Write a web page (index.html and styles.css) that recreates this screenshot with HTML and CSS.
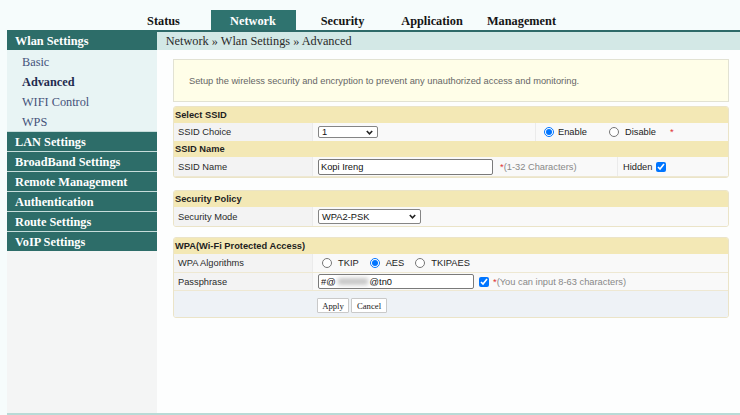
FILE: index.html
```html
<!DOCTYPE html>
<html>
<head>
<meta charset="utf-8">
<link rel="stylesheet" href="styles.css">
</head>
<body>
<div class="page">
  <nav class="tabs">
    <a class="tab">Status</a>
    <a class="tab active">Network</a>
    <a class="tab">Security</a>
    <a class="tab">Application</a>
    <a class="tab">Management</a>
  </nav>
  <div class="body">
    <aside class="side">
      <div class="grp first">Wlan Settings</div>
      <ul class="sub">
        <li>Basic</li>
        <li class="cur">Advanced</li>
        <li>WIFI Control</li>
        <li>WPS</li>
      </ul>
      <div class="grp">LAN Settings</div>
      <div class="grp">BroadBand Settings</div>
      <div class="grp">Remote Management</div>
      <div class="grp">Authentication</div>
      <div class="grp">Route Settings</div>
      <div class="grp">VoIP Settings</div>
    </aside>
    <main class="main">
      <div class="crumb">Network » Wlan Settings » Advanced</div>
      <div class="content">
        <div class="desc">Setup the wireless security and encryption to prevent any unauthorized access and monitoring.</div>

        <section class="tbl">
          <div class="th">Select SSID</div>
          <div class="row r18">
            <div class="lbl">SSID Choice</div>
            <div class="val v-choice">
              <div class="sel sel-s"><span>1</span><svg width="7" height="5" viewBox="0 0 7 5"><path d="M0.8 1 L3.5 3.8 L6.2 1" fill="none" stroke="#222" stroke-width="1.6"/></svg></div>
            </div>
            <div class="val v-rest">
              <label class="opt o-en"><input type="radio" name="en" checked><span>Enable</span></label>
              <label class="opt o-dis"><input type="radio" name="en"><span>Disable</span></label>
              <span class="req">*</span>
            </div>
          </div>
          <div class="th">SSID Name</div>
          <div class="row r20">
            <div class="lbl">SSID Name</div>
            <div class="val v-name">
              <input class="inp inp-name" type="text" value="Kopi Ireng">
              <span class="note"><span class="req">*</span>(1-32 Characters)</span>
            </div>
            <div class="val v-rest v-hidden">
              <span>Hidden</span><input class="chk" type="checkbox" checked>
            </div>
          </div>
        </section>

        <section class="tbl t2">
          <div class="th">Security Policy</div>
          <div class="row r19">
            <div class="lbl">Security Mode</div>
            <div class="val v-full">
              <div class="sel sel-m"><span>WPA2-PSK</span><svg width="7" height="5" viewBox="0 0 7 5"><path d="M0.8 1 L3.5 3.8 L6.2 1" fill="none" stroke="#222" stroke-width="1.6"/></svg></div>
            </div>
          </div>
        </section>

        <section class="tbl t3">
          <div class="th">WPA(Wi-Fi Protected Access)</div>
          <div class="row r18">
            <div class="lbl">WPA Algorithms</div>
            <div class="val v-full">
              <label class="opt o-alg"><input type="radio" name="alg"><span>TKIP</span></label>
              <label class="opt o-alg"><input type="radio" name="alg" checked><span>AES</span></label>
              <label class="opt o-alg"><input type="radio" name="alg"><span>TKIPAES</span></label>
            </div>
          </div>
          <div class="row r18 bt">
            <div class="lbl">Passphrase</div>
            <div class="val v-full">
              <div class="inp inp-pass">#@<span class="blur"></span>@tn0</div>
              <input class="chk chk-pass" type="checkbox" checked>
              <span class="note"><span class="req">*</span>(You can input 8-63 characters)</span>
            </div>
          </div>
          <div class="row btnrow">
            <button class="btn b-apply">Apply</button>
            <button class="btn b-cancel">Cancel</button>
          </div>
        </section>
      </div>
    </main>
  </div>
  <div class="foot"></div>
</div>
</body>
</html>
```
FILE: styles.css
```css
* { box-sizing: border-box; }
body {
  margin: 0;
  background: #f6fcfc;
  font-family: "Liberation Serif", serif;
}
.page {
  width: 740px;
  height: 415px;
  display: flex;
  flex-direction: column;
}
.tabs {
  height: 30px;
  padding: 10px 0 0 121px;
  display: flex;
  gap: 4.5px;
}
.tab {
  width: 85px;
  height: 20px;
  line-height: 22px;
  text-align: center;
  font-weight: bold;
  font-size: 12.3px;
  color: #141414;
}
.tab.active {
  background: #2f736f;
  color: #fff;
}
.body {
  flex: 1;
  display: flex;
}
.side {
  width: 150px;
  margin-left: 7px;
  background: #f4f5f5;
}
.grp {
  height: 20px;
  line-height: 21px;
  padding-left: 8px;
  border-top: 1px solid #c7dddb;
  background: #2d6d69;
  color: #fff;
  font-weight: bold;
  font-size: 12.3px;
}
.grp.first {
  border-top: 0;
  line-height: 22px;
}
.sub {
  list-style: none;
  margin: 0;
  padding: 1px 0 0;
  background: #e8f4f4;
}
.sub li {
  height: 20px;
  line-height: 22px;
  padding-left: 15px;
  font-size: 12.3px;
  color: #44527a;
}
.sub li.cur {
  font-weight: bold;
  color: #1f2b4f;
}
.main {
  flex: 1;
  background: #fdfefe;
}
.crumb {
  height: 20px;
  border-top: 2px solid #2e6a69;
  background: #d3e8e6;
  padding-left: 8.7px;
  line-height: 19px;
  font-size: 12.3px;
  color: #2a2a2a;
}
.content {
  padding: 9px 11px 0 16px;
  font-family: "Liberation Sans", sans-serif;
  font-size: 9.3px;
  color: #222;
}
.desc {
  height: 43px;
  line-height: 43px;
  border: 1px solid #e2e2d3;
  background: #fffee8;
  padding-left: 15px;
  color: #666;
}
.tbl {
  margin-top: 4px;
  border: 1px solid #ebe4c8;
  border-radius: 3px;
  overflow: hidden;
  background: #f8f8f8;
}
.tbl.t2 { margin-top: 12px; }
.tbl.t3 { margin-top: 10px; }
.th {
  height: 16px;
  line-height: 16px;
  padding-left: 1px;
  background: #f3e8b5;
  font-weight: bold;
  color: #1e1e1e;
}
.row {
  display: flex;
  align-items: stretch;
}
.row.bt { border-top: 1px solid #eee8d2; }
.r18 { height: 18px; }
.r19 { height: 19px; }
.r20 { height: 20px; border-bottom: 1px solid #eee8d2; }
.lbl {
  width: 138px;
  padding-left: 4px;
  display: flex;
  align-items: center;
  background: #f3f3f3;
  color: #2a2a2a;
}
.val {
  display: flex;
  align-items: center;
  padding-left: 5px;
  background: #f9f9f9;
  border-left: 1px solid #ebebeb;
}
.v-choice { width: 223px; }
.v-name { width: 305px; }
.v-rest { flex: 1; }
.v-full { flex: 1; }
.v-hidden { padding-left: 5px; }
.v-hidden span { margin-right: 4px; }
.sel {
  display: flex;
  align-items: center;
  justify-content: space-between;
  background: #fff;
  border: 1px solid #858585;
  border-radius: 2px;
  padding: 0 4px 0 3px;
  color: #111;
}
.sel-s { width: 60px; height: 12px; }
.sel-m { width: 103px; height: 15px; }
.inp {
  height: 16px;
  border: 1px solid #7a7a7a;
  border-radius: 2px;
  background: #fff;
  padding: 0 2px;
  font-family: "Liberation Sans", sans-serif;
  font-size: 9.3px;
  color: #111;
  outline: none;
}
.inp-name { width: 175px; }
.inp-pass {
  width: 156px;
  height: 15px;
  display: flex;
  align-items: center;
}
.blur {
  display: inline-block;
  width: 30px;
  height: 7px;
  margin: 0 2px;
  background: #c6c6c6;
  filter: blur(2px);
}
.note {
  margin-left: 7px;
  color: #888;
}
.req { color: #e03434; }
.v-rest > .req { margin-left: 14px; }
.opt {
  display: flex;
  align-items: center;
}
input[type=radio] {
  width: 10px;
  height: 10px;
  margin: 0;
}
.o-en input { margin-left: 3px; margin-right: 4px; }
.o-dis { margin-left: 22px; }
.o-dis input { margin-right: 6px; }
.o-alg { margin-right: 7px; }
.o-alg input { margin-left: 4px; margin-right: 6px; }
.chk {
  width: 10px;
  height: 10px;
  margin: 0;
}
.chk-pass { margin-left: 5px; }
.chk-pass + .note { margin-left: 4px; }
.btnrow {
  height: 27px;
  align-items: flex-start;
  padding: 7px 0 0 143px;
  gap: 2px;
  background: #eef2f6;
  border-top: 1px solid #eee8d2;
}
.btn {
  height: 15px;
  padding: 0;
  background: #fff;
  border: 1px solid #c9c9c9;
  border-radius: 1px;
  font-family: "Liberation Serif", serif;
  font-size: 8.7px;
  color: #222;
}
.b-apply { width: 32px; }
.b-cancel { width: 36px; }
.foot {
  height: 2px;
  margin-left: 7px;
  background: #b8dad6;
}
```
